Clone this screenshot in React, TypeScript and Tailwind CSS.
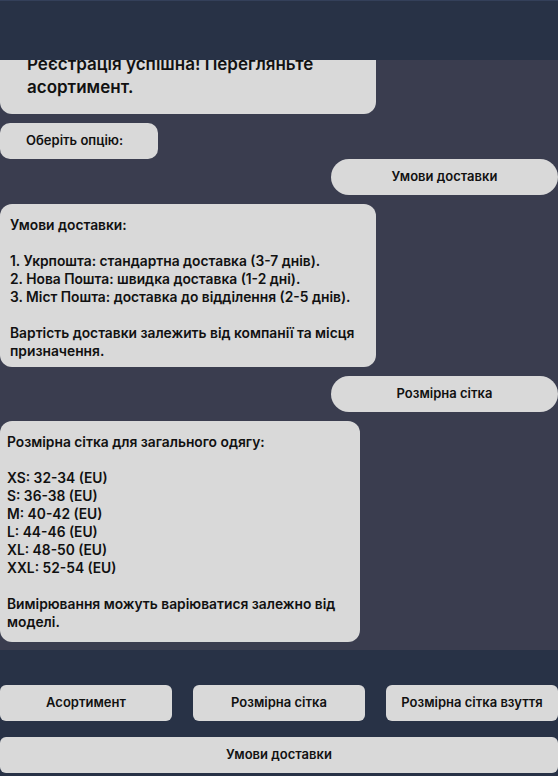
import React from "react";

const font = { fontFamily: "Inter, 'Noto Sans', sans-serif" };

export default function App() {
  return (
    <div className="w-[558px] h-[776px] flex flex-col overflow-hidden bg-[#3a3d4f]" style={font}>
      <div className="h-[60px] shrink-0 bg-[#283246] border-t border-[#34405a]" />
      <div className="h-[590px] shrink-0 flex flex-col justify-end gap-[9px] overflow-hidden pb-[8px] text-[#111]">
        <div className="w-[376px] shrink-0 rounded-[12px] bg-[#d9d9d9] pl-[27px] pr-4 pt-3 pb-[15px] text-[17px] font-semibold leading-[23px]">
          Реєстрація успішна! Перегляньте асортимент.
        </div>
        <div className="w-[158px] shrink-0 h-[36px] rounded-[10px] bg-[#d9d9d9] pl-[26px] flex items-center text-[13px] font-semibold">
          Оберіть опцію:
        </div>
        <div className="self-end w-[227px] shrink-0 h-[36px] -mt-[9px] rounded-full bg-[#d9d9d9] flex items-center justify-center text-[13px] font-semibold">
          Умови доставки
        </div>
        <div className="w-[376px] shrink-0 rounded-[12px] bg-[#d9d9d9] pl-[10px] pr-3 pt-3 pb-[7px] text-[13.8px] font-semibold leading-[18px] whitespace-pre-line">
          {"Умови доставки:\n\n1. Укрпошта: стандартна доставка (3-7 днів).\n2. Нова Пошта: швидка доставка (1-2 дні).\n3. Міст Пошта: доставка до відділення (2-5 днів).\n\nВартість доставки залежить від компанії та місця призначення."}
        </div>
        <div className="self-end w-[227px] shrink-0 h-[36px] rounded-full bg-[#d9d9d9] flex items-center justify-center text-[13px] font-semibold">
          Розмірна сітка
        </div>
        <div className="w-[360px] shrink-0 rounded-[12px] bg-[#d9d9d9] pl-[7px] pr-3 pt-3 pb-[11px] text-[13.8px] font-semibold leading-[18px] whitespace-pre-line">
          {"Розмірна сітка для загального одягу:\n\nXS: 32-34 (EU)\nS: 36-38 (EU)\nM: 40-42 (EU)\nL: 44-46 (EU)\nXL: 48-50 (EU)\nXXL: 52-54 (EU)\n\nВимірювання можуть варіюватися залежно від моделі."}
        </div>
      </div>
      <div className="flex-1 bg-[#283246] pt-[35px] flex flex-col gap-[16px] text-[#111]">
        <div className="grid grid-cols-3 gap-[21px]">
          {["Асортимент", "Розмірна сітка", "Розмірна сітка взуття"].map((t) => (
            <div key={t} className="h-[36px] rounded-[6px] bg-[#d9d9d9] flex items-center justify-center text-[13px] font-semibold whitespace-nowrap">
              {t}
            </div>
          ))}
        </div>
        <div className="h-[36px] rounded-[6px] bg-[#d9d9d9] flex items-center justify-center text-[13px] font-semibold">
          Умови доставки
        </div>
      </div>
    </div>
  );
}
